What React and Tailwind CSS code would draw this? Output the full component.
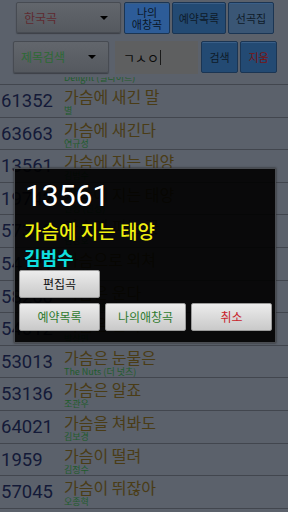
import React from "react";

const rows = [
  { no: "50129", title: "가슴에 새긴 사랑", artist: "Delight (딜라이트)" },
  { no: "61352", title: "가슴에 새긴 말", artist: "별" },
  { no: "63663", title: "가슴에 새긴다", artist: "연규성" },
  { no: "13561", title: "가슴에 지는 태양", artist: "김범수" },
  { no: "19742", title: "가슴에 지는 태양", artist: "진성 (진성)" },
  { no: "57310", title: "가슴에 피는 꽃", artist: "김경호" },
  { no: "54121", title: "가슴으로 외쳐", artist: "윤도현" },
  { no: "58260", title: "가슴은 운다", artist: "Wanted (원티드)" },
  { no: "54012", title: "가슴은 안다", artist: "박상민" },
  { no: "53013", title: "가슴은 눈물은", artist: "The Nuts (더 넛츠)" },
  { no: "53136", title: "가슴은 알죠", artist: "조관우" },
  { no: "64021", title: "가슴을 쳐봐도", artist: "김보경" },
  { no: "1959", title: "가슴이 떨려", artist: "김정수" },
  { no: "57045", title: "가슴이 뛰잖아", artist: "오종혁" },
  { no: "61840", title: "가슴이 아파", artist: "이승철" },
];

const kr = { fontFamily: "'Noto Sans CJK KR', 'Noto Sans', sans-serif" };
const num = { fontFamily: "Roboto, 'Liberation Sans', sans-serif" };

const Spinner = ({ label, color, className }) => (
  <div
    className={`flex items-center justify-between rounded-[2px] border border-[#474b52] bg-gradient-to-b from-[#62666c] to-[#55595f] pl-[7px] pr-[12px] shadow-[0_1px_1px_#3c4046] ${className}`}
  >
    <span className={`text-[12px] ${color}`} style={kr}>
      {label}
    </span>
    <span className="h-0 w-0 border-x-[4px] border-t-[4px] border-x-transparent border-t-black" />
  </div>
);

const BlueButton = ({ children, className, tone = "bg-[#234a73]", text = "text-[#0e1a28]" }) => (
  <div
    className={`flex items-center justify-center rounded-[2px] border border-[#1b3553] ${tone} text-[11px] leading-[12px] ${text} shadow-[inset_0_1px_0_#3a5f88] ${className}`}
    style={kr}
  >
    {children}
  </div>
);

const DlgButton = ({ children, color, className }) => (
  <div
    className={`flex items-center justify-center rounded-[2px] border border-[#9a9a9a] bg-gradient-to-b from-[#ececec] to-[#c9c9c9] text-[12px] ${color} ${className}`}
    style={kr}
  >
    {children}
  </div>
);

export default function App() {
  return (
    <div className="relative h-[512px] w-[288px] overflow-hidden bg-[#5b616b]">
      {/* header */}
      <div className="relative z-10 h-[77px] bg-[#5b616b]">
        <div className="flex h-[36px] items-start pt-[2px]">
          <Spinner label="한국곡" color="text-[#5f2a30]" className="ml-[16px] h-[31px] w-[105px]" />
          <BlueButton
            className="ml-[3px] h-[32px] w-[46px] flex-col"
            tone="bg-[#2d5c98]"
            text="text-[#0a1626]"
          >
            <span>나의</span>
            <span>애창곡</span>
          </BlueButton>
          <BlueButton className="ml-[2px] h-[32px] w-[54px]">예약목록</BlueButton>
          <BlueButton className="ml-[2px] h-[32px] w-[46px]" tone="bg-[#3a5675]">
            선곡집
          </BlueButton>
        </div>
        <div className="flex h-[34px] items-start pt-[5px]">
          <Spinner label="제목검색" color="text-[#2d6a34]" className="ml-[13px] h-[32px] w-[96px]" />
          <div className="ml-[6px] flex h-[33px] w-[83px] items-center bg-[#5e5f60] pl-[8px] text-[13px] text-[#0a0a0a]" style={kr}>
            ㄱㅅㅇ
            <span className="ml-[1px] h-[15px] w-[1px] bg-[#1a1a1a]" />
          </div>
          <BlueButton className="ml-[3px] h-[32px] w-[37px]">검색</BlueButton>
          <BlueButton className="ml-[2px] h-[32px] w-[37px]" text="text-[#7a1212]">
            지움
          </BlueButton>
        </div>
      </div>

      {/* list */}
      <div className="absolute left-0 right-0 top-[77px] bottom-0 overflow-hidden">
        <div className="-mt-[25.6px] border-t border-[#41454d]">
          {rows.map((r, i) => (
            <div key={i} className="flex h-[32.6px] items-start border-b border-[#42464e]">
              <div className="w-[64px] pl-[1px] pt-[5px] text-[18.5px] leading-[22px] text-[#141a38]" style={num}>
                {r.no}
              </div>
              <div className="flex flex-col pt-[1px]">
                <span className="text-[16px] leading-[20px] text-[#4a3c16]" style={kr}>
                  {r.title}
                </span>
                <span className="text-[9px] leading-[10px] text-[#1f5c2c]" style={kr}>
                  {r.artist}
                </span>
              </div>
            </div>
          ))}
        </div>
      </div>

      {/* dialog */}
      <div className="absolute left-[14px] top-[168px] z-20 h-[175px] w-[262px] border border-[#4a4d52] bg-black/90 shadow-[0_0_2px_#222]">
        <div className="pl-[10px] pt-[9px] text-[30px] leading-[36px] text-white" style={num}>
          13561
        </div>
        <div className="pl-[9px] pt-[4px] text-[19px] font-medium leading-[25px] text-[#f0f010]" style={kr}>
          가슴에 지는 태양
        </div>
        <div className="pl-[9px] pt-[3px] text-[18px] font-bold leading-[23px] text-[#10e0e0]" style={kr}>
          김범수
        </div>
        <div className="flex pl-[4px] pt-[1px]">
          <DlgButton color="text-[#111]" className="h-[28px] w-[81px]">
            편집곡
          </DlgButton>
        </div>
        <div className="flex gap-[5px] pl-[4px] pt-[5px]">
          <DlgButton color="text-[#2e7a2e]" className="h-[28px] w-[81px]">
            예약목록
          </DlgButton>
          <DlgButton color="text-[#2e7a2e]" className="h-[28px] w-[81px]">
            나의애창곡
          </DlgButton>
          <DlgButton color="text-[#c8242c]" className="h-[28px] w-[81px]">
            취소
          </DlgButton>
        </div>
      </div>
    </div>
  );
}
